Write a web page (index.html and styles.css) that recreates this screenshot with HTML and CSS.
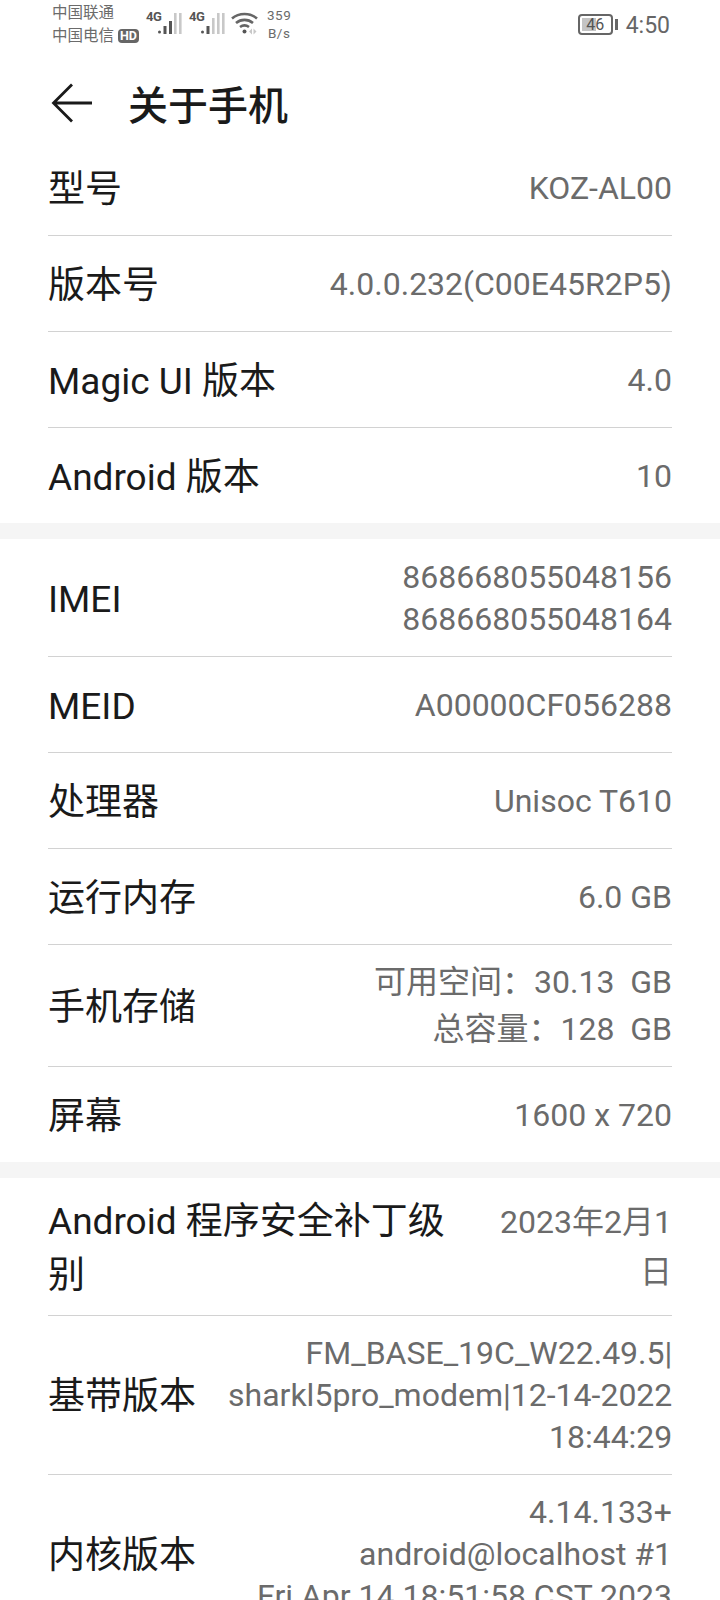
FILE: index.html
```html
<!DOCTYPE html>
<html lang="zh-CN">
<head>
<meta charset="utf-8">
<title>关于手机</title>
<link rel="stylesheet" href="styles.css">
</head>
<body>
<div class="screen">
  <div class="status">
    <div class="carriers">
      <div>中国联通</div>
      <div class="c2">中国电信<span class="hd">HD</span></div>
    </div>
    <div class="sig">
      <span class="g">4G</span>
      <svg class="bars" width="24" height="24" viewBox="0 0 24 24"><rect x="0" y="17.500" width="3" height="3" rx="1.5" fill="#555"/><rect x="5.5" y="13" width="3" height="8" fill="#555"/><rect x="11" y="8" width="3" height="13" fill="#555"/><rect x="16" y="0" width="2.6" height="21" fill="#c8c8c8"/><rect x="21" y="0" width="2.6" height="21" fill="#c8c8c8"/></svg>
    </div>
    <div class="sig">
      <span class="g">4G</span>
      <svg class="bars" width="24" height="24" viewBox="0 0 24 24"><rect x="0" y="17.500" width="3" height="3" rx="1.5" fill="#555"/><rect x="5.5" y="13" width="3" height="8" fill="#555"/><rect x="11" y="5" width="2.6" height="16" fill="#c8c8c8"/><rect x="16" y="0" width="2.6" height="21" fill="#c8c8c8"/><rect x="21" y="0" width="2.6" height="21" fill="#c8c8c8"/></svg>
    </div>
    <svg class="wifi" width="30" height="24" viewBox="0 0 30 24"><g fill="none" stroke="#666" stroke-width="2.6"><path d="M1 6.500C8 .5 19 .5 26 6.500"/><path d="M5 11C10 6.800 17 6.800 22 11"/><path d="M9 15C12 12.800 15 12.800 18 15"/></g><circle cx="13.500" cy="19.500" r="2" fill="#555"/><path d="M18 19.500l3-3v6zM22.500 16.500l3 3-3 3z" fill="#c8c8c8"/></svg>
    <div class="speed"><div>359</div><div>B/s</div></div>
    <div class="spacer"></div>
    <div class="batt"><span class="fill"></span><span class="num">46</span></div>
    <span class="cap"></span>
    <span class="time">4:50</span>
  </div>
  <div class="title">
    <svg class="back" width="42" height="42" viewBox="0 0 42 42"><path d="M21 2.500L2.500 21 21 39.500M2.500 21H41" fill="none" stroke="#1a1a1a" stroke-width="2.800"/></svg>
    <h1>关于手机</h1>
  </div>
  <section class="sec">
    <div class="row"><div class="k">型号</div><div class="v">KOZ-AL00</div></div>
    <div class="row"><div class="k">版本号</div><div class="v">4.0.0.232(C00E45R2P5)</div></div>
    <div class="row"><div class="k">Magic UI 版本</div><div class="v">4.0</div></div>
    <div class="row"><div class="k">Android 版本</div><div class="v">10</div></div>
  </section>
  <section class="sec">
    <div class="row imei"><div class="k">IMEI</div><div class="v">868668055048156<br>868668055048164</div></div>
    <div class="row"><div class="k">MEID</div><div class="v">A00000CF056288</div></div>
    <div class="row"><div class="k">处理器</div><div class="v">Unisoc T610</div></div>
    <div class="row"><div class="k">运行内存</div><div class="v">6.0 GB</div></div>
    <div class="row store"><div class="k">手机存储</div><div class="v pre">可用空间：30.13  GB<br>总容量：128  GB</div></div>
    <div class="row"><div class="k">屏幕</div><div class="v">1600 x 720</div></div>
  </section>
  <section class="sec">
    <div class="row tall"><div class="k">Android 程序安全补丁级<br>别</div><div class="v wide">2023年2月1<br>日</div></div>
    <div class="row"><div class="k">基带版本</div><div class="v">FM_BASE_19C_W22.49.5|<br>sharkl5pro_modem|12-14-2022<br>18:44:29</div></div>
    <div class="row"><div class="k">内核版本</div><div class="v">4.14.133+<br>android@localhost #1<br>Fri Apr 14 18:51:58 CST 2023</div></div>
  </section>
</div>
</body>
</html>
```
FILE: styles.css
```css
html, body { margin: 0; padding: 0; background: #fff; }
.screen {
  width: 720px; height: 1600px; overflow: hidden; background: #f5f5f5;
  font-family: Roboto, "Noto Sans CJK SC", sans-serif;
}
.status {
  height: 56px; background: #fff; display: flex; align-items: center;
  padding: 0 50px 8px 52px; box-sizing: border-box; color: #6b6b6b;
}
.carriers { font-size: 15.5px; line-height: 23px; width: 94px; flex: none; margin-top: 1px; }
.c2 { display: flex; align-items: center; white-space: nowrap; }
.hd { background: #666; color: #fff; font-size: 12.500px; line-height: 14px; font-weight: 700; border-radius: 4px; padding: 0 2px; margin-left: 4px; }
.sig { display: flex; align-items: flex-start; margin-right: 7px; width: 36px; flex: none; }
.g { font-size: 13px; letter-spacing: -0.5px; font-weight: 700; line-height: 14px; margin-top: -1px; width: 12px; flex: none; color: #555; }
.bars { margin-top: 2px; flex: none; }
.wifi { margin-left: -1px; flex: none; }
.speed { font-size: 13.500px; line-height: 18px; text-align: center; margin-left: 6px; letter-spacing: 0.5px; }
.spacer { flex: 1; }
.batt {
  width: 31px; height: 17px; border: 2px solid #666; border-radius: 4px; margin-top: 1px;
  position: relative; display: flex; align-items: center; justify-content: center;
}
.fill { position: absolute; left: 2px; top: 2px; bottom: 2px; width: 14px; background: #c4c4c4; }
.num { position: relative; font-size: 16px; color: #555; }
.cap { width: 3px; height: 11px; background: #666; margin: 1px 8px 0 2px; }
.time { font-size: 23px; color: #666; margin-top: 2px; }
.title { height: 84px; box-sizing: border-box; padding-top: 10px; background: #fff; display: flex; align-items: center; padding-left: 51px; }
.back { flex: none; }
.title h1 { margin: 0 0 0 35px; font-size: 40px; font-weight: 500; color: #1a1a1a; }
.sec { background: #fff; padding: 0 48px; margin-bottom: 16px; }
.row {
  min-height: 96px; box-sizing: border-box; display: flex; align-items: center;
  justify-content: space-between; gap: 32px; padding: 16px 0;
  border-bottom: 1px solid #d2d2d2;
}
.row:last-child { border-bottom: 0; min-height: 95px; }
.row.imei { min-height: 118px; }
.row.store { padding: 13.5px 0; }
.row.tall { padding: 12.5px 0; }
.k { font-size: 37px; color: #1a1a1a; white-space: nowrap; line-height: 54px; padding-top: 4px; }
.v { font-size: 32px; color: #6b6b6b; text-align: right; line-height: 42px; white-space: nowrap; }
.pre { white-space: pre; line-height: 47px; }
.wide { line-height: 50px; }
```
